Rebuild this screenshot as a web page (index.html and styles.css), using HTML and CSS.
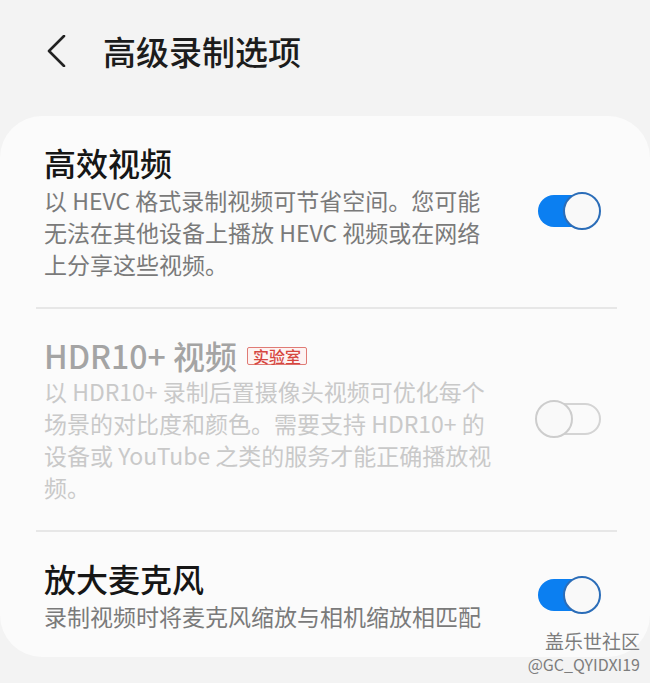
FILE: index.html
```html
<!DOCTYPE html>
<html lang="zh-CN">
<head>
    <meta charset="UTF-8">
    <meta name="viewport" content="width=device-width, initial-scale=1.0">
    <title>高级录制选项</title>
    <link rel="stylesheet" href="styles.css">
</head>
<body>
    <header class="topbar">
        <span class="back">
            <svg width="20" height="32" viewBox="0 0 20 32">
                <path d="M18 1 L3 16 L18 31" fill="none" stroke="#222" stroke-width="2.6" stroke-linecap="round" stroke-linejoin="round"/>
            </svg>
        </span>
        <h1>高级录制选项</h1>
    </header>

    <main class="card">
        <div class="item">
            <div class="text">
                <div class="title">高效视频</div>
                <div class="desc">以 HEVC 格式录制视频可节省空间。您可能无法在其他设备上播放 HEVC 视频或在网络上分享这些视频。</div>
            </div>
            <span class="switch on"><span class="knob"></span></span>
        </div>
        <div class="divider"></div>

        <div class="item disabled">
            <div class="text">
                <div class="title">HDR10+ 视频 <span class="badge">实验室</span></div>
                <div class="desc">以 HDR10+ 录制后置摄像头视频可优化每个场景的对比度和颜色。需要支持 HDR10+ 的设备或 YouTube 之类的服务才能正确播放视频。</div>
            </div>
            <span class="switch off"><span class="knob"></span></span>
        </div>
        <div class="divider"></div>

        <div class="item last">
            <div class="text">
                <div class="title">放大麦克风</div>
                <div class="desc">录制视频时将麦克风缩放与相机缩放相匹配</div>
            </div>
            <span class="switch on"><span class="knob"></span></span>
        </div>
    </main>

    <div class="watermark">
        <div class="wm-name">盖乐世社区</div>
        <div class="wm-id">@GC_QYIDXI19</div>
    </div>
</body>
</html>
```

FILE: styles.css
```css
body {
    margin: 0;
    padding: 0;
    background-color: #f3f3f3;
    font-family: "Noto Sans CJK SC", "Noto Sans", sans-serif;
    width: 650px;
    height: 683px;
    overflow: hidden;
    position: relative;
}

.topbar {
    height: 102px;
    display: flex;
    align-items: center;
    padding-left: 46px;
}

.back {
    display: flex;
    width: 20px;
    height: 32px;
    margin-right: 37px;
}

.topbar h1 {
    margin: 0;
    font-size: 33px;
    font-weight: 500;
    color: #1c1c1c;
}

.card {
    margin-top: 14px;
    background-color: #fbfbfb;
    border-radius: 42px;
    padding: 26px 0 25px;
}

.item {
    display: flex;
    align-items: center;
    padding: 0 49px 27px 44px;
}

.divider + .item {
    padding-top: 26px;
}

.item.last {
    padding-bottom: 0;
}

.text {
    width: 452px;
    margin-right: 41px;
}

.title {
    font-size: 32px;
    line-height: 40px;
    font-weight: 500;
    color: #161616;
    display: flex;
    align-items: center;
}

.desc {
    margin-top: 2px;
    font-size: 23px;
    line-height: 32px;
    color: #7a7a7a;
}

.disabled .title {
    color: #a4a4a4;
}

.disabled .desc {
    margin-top: 0;
    color: #c9c9c9;
}

.badge {
    margin-left: 10px;
    margin-top: 1px;
    font-size: 16px;
    line-height: 14px;
    padding: 1px 5px;
    color: #d6453e;
    background-color: #fdf3f2;
    border: 1.5px solid #e07b75;
    border-radius: 2px;
    font-weight: 500;
}

.divider {
    height: 2px;
    background-color: #e7e7e7;
    margin: 0 33px 0 36px;
}

/* toggle switch */
.switch {
    position: relative;
    flex: 0 0 64px;
    height: 38px;
}

.switch::before {
    content: "";
    position: absolute;
    left: 1px;
    top: 3px;
    width: 58px;
    height: 32px;
    border-radius: 16px;
    box-sizing: border-box;
}

.switch .knob {
    position: absolute;
    top: 0;
    width: 38px;
    height: 38px;
    border-radius: 50%;
    box-sizing: border-box;
    background-color: #f9f9f9;
}

.switch.on::before {
    background-color: #0b7ff1;
}

.switch.on .knob {
    right: 0;
    border: 2.5px solid #2b6db8;
}

.switch.off {
    margin-left: -2px;
    flex-basis: 66px;
}

.switch.off::before {
    left: 4px;
    width: 62px;
    border: 2px solid #d4d4d4;
    background-color: #fafafa;
}

.switch.off .knob {
    left: 0;
    border: 2px solid #cdcdcd;
}

.watermark {
    position: absolute;
    right: 10px;
    bottom: 10px;
    text-align: right;
    color: #7d7d7d;
}

.wm-name {
    font-size: 19px;
    line-height: 20px;
}

.wm-id {
    font-size: 16px;
    line-height: 18px;
    margin-top: 4px;
}
```
